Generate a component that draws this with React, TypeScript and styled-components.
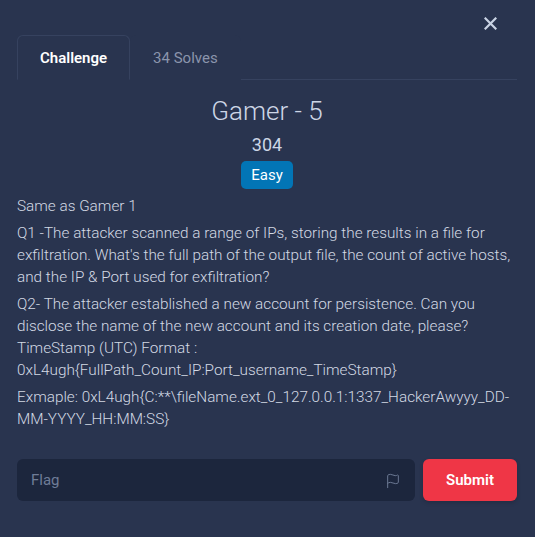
import React from "react";
import styled, { createGlobalStyle } from "styled-components";
import { Flag } from "lucide-react";

const Global = createGlobalStyle`
  html, body {
    margin: 0;
    padding: 0;
    background: #29344f;
  }
  body {
    font-family: Roboto, "Noto Sans", sans-serif;
    color: #d3d9e4;
  }
  * { box-sizing: border-box; }
`;

const Modal = styled.div`
  width: 535px;
  min-height: 537px;
  padding: 0 18px 0 17px;
  background: #29344f;
`;

const Header = styled.div`
  height: 35px;
  display: flex;
  justify-content: flex-end;
  align-items: flex-start;
`;

const CloseButton = styled.button`
  margin: 17px 20px 0 0;
  padding: 0;
  width: 13px;
  height: 13px;
  border: 0;
  background: transparent;
  color: #c9d3e4;
  display: flex;
  cursor: pointer;
`;

const Tabs = styled.nav`
  display: flex;
  border-bottom: 1px solid #36425f;
`;

const Tab = styled.div<{ $active?: boolean }>`
  height: 45px;
  padding: 0 22px;
  display: flex;
  align-items: center;
  font-size: 15px;
  font-weight: ${(p) => (p.$active ? 600 : 400)};
  color: ${(p) => (p.$active ? "#ffffff" : "#8b95ac")};
  border: 1px solid ${(p) => (p.$active ? "#36425f" : "transparent")};
  border-bottom-color: transparent;
  border-radius: 6px 6px 0 0;
  margin-bottom: -1px;
  background: #29344f;
`;

const Body = styled.div`
  padding-top: 16px;
  display: flex;
  flex-direction: column;
`;

const Title = styled.h2`
  margin: 0;
  text-align: center;
  font-size: 26px;
  line-height: 31px;
  font-weight: 300;
  color: #cdd6e6;
`;

const Value = styled.div`
  margin-top: 7px;
  text-align: center;
  font-size: 18px;
  line-height: 22px;
  font-weight: 400;
  color: #cdd6e6;
`;

const BadgeRow = styled.div`
  margin-top: 5px;
  display: flex;
  justify-content: center;
`;

const Badge = styled.span`
  height: 28px;
  padding: 0 10px;
  display: flex;
  align-items: center;
  border-radius: 5px;
  background: #0275b6;
  color: #ffffff;
  font-size: 15px;
  font-weight: 400;
`;

const Description = styled.div`
  margin-top: 6px;
  font-size: 15.3px;
  line-height: 22px;
  font-weight: 300;
  color: #d3d9e4;
`;

const Para = styled.p`
  margin: 0 0 5px;
`;

const Form = styled.form`
  margin-top: 24px;
  display: flex;
  gap: 8px;
`;

const InputWrap = styled.div`
  position: relative;
  flex: 1;
  height: 42px;
`;

const Input = styled.input`
  width: 100%;
  height: 100%;
  border: 0;
  border-radius: 6px;
  background: #1c263d;
  padding: 0 44px 0 14px;
  font-family: Roboto, "Noto Sans", sans-serif;
  font-size: 15px;
  color: #e0e6f0;
  outline: none;
  &::placeholder {
    color: #6f7c97;
  }
`;

const InputIcon = styled.span`
  position: absolute;
  right: 14px;
  top: 14px;
  display: flex;
  color: #6b7893;
`;

const Submit = styled.button`
  width: 94px;
  height: 42px;
  border: 0;
  border-radius: 6px;
  background: #ef3646;
  color: #ffffff;
  font-family: Roboto, "Noto Sans", sans-serif;
  font-size: 15px;
  font-weight: 600;
  box-shadow: 0 2px 4px rgba(0, 0, 0, 0.15);
  cursor: pointer;
`;

export default function App() {
  return (
    <>
      <Global />
      <Modal>
        <Header>
          <CloseButton aria-label="Close">
            <svg width="13" height="13" viewBox="0 0 13 13">
              <path
                d="M1.5 1.5 L11.5 11.5 M11.5 1.5 L1.5 11.5"
                stroke="currentColor"
                strokeWidth="2.2"
                strokeLinecap="square"
              />
            </svg>
          </CloseButton>
        </Header>
        <Tabs>
          <Tab $active>Challenge</Tab>
          <Tab>34 Solves</Tab>
        </Tabs>
        <Body>
          <Title>Gamer - 5</Title>
          <Value>304</Value>
          <BadgeRow>
            <Badge>Easy</Badge>
          </BadgeRow>
          <Description>
            <Para>Same as Gamer 1</Para>
            <Para>
              Q1 -The attacker scanned a range of IPs, storing the results in a file for
              exfiltration. What's the full path of the output file, the count of active
              hosts, and the IP &amp; Port used for exfiltration?
            </Para>
            <Para>
              Q2- The attacker established a new account for persistence. Can you
              disclose the name of the new account and its creation date, please?
              <br />
              TimeStamp (UTC) Format :
              <br />
              0xL4ugh{"{"}FullPath_Count_IP:Port_username_TimeStamp{"}"}
            </Para>
            <Para>
              Exmaple: 0xL4ugh{"{"}C:**\fileName.ext_0_127.0.0.1:1337_HackerAwyyy_DD-MM-YYYY_HH:MM:SS{"}"}
            </Para>
          </Description>
          <Form onSubmit={(e) => e.preventDefault()}>
            <InputWrap>
              <Input placeholder="Flag" />
              <InputIcon>
                <Flag size={16} strokeWidth={1.5} />
              </InputIcon>
            </InputWrap>
            <Submit type="submit">Submit</Submit>
          </Form>
        </Body>
      </Modal>
    </>
  );
}
